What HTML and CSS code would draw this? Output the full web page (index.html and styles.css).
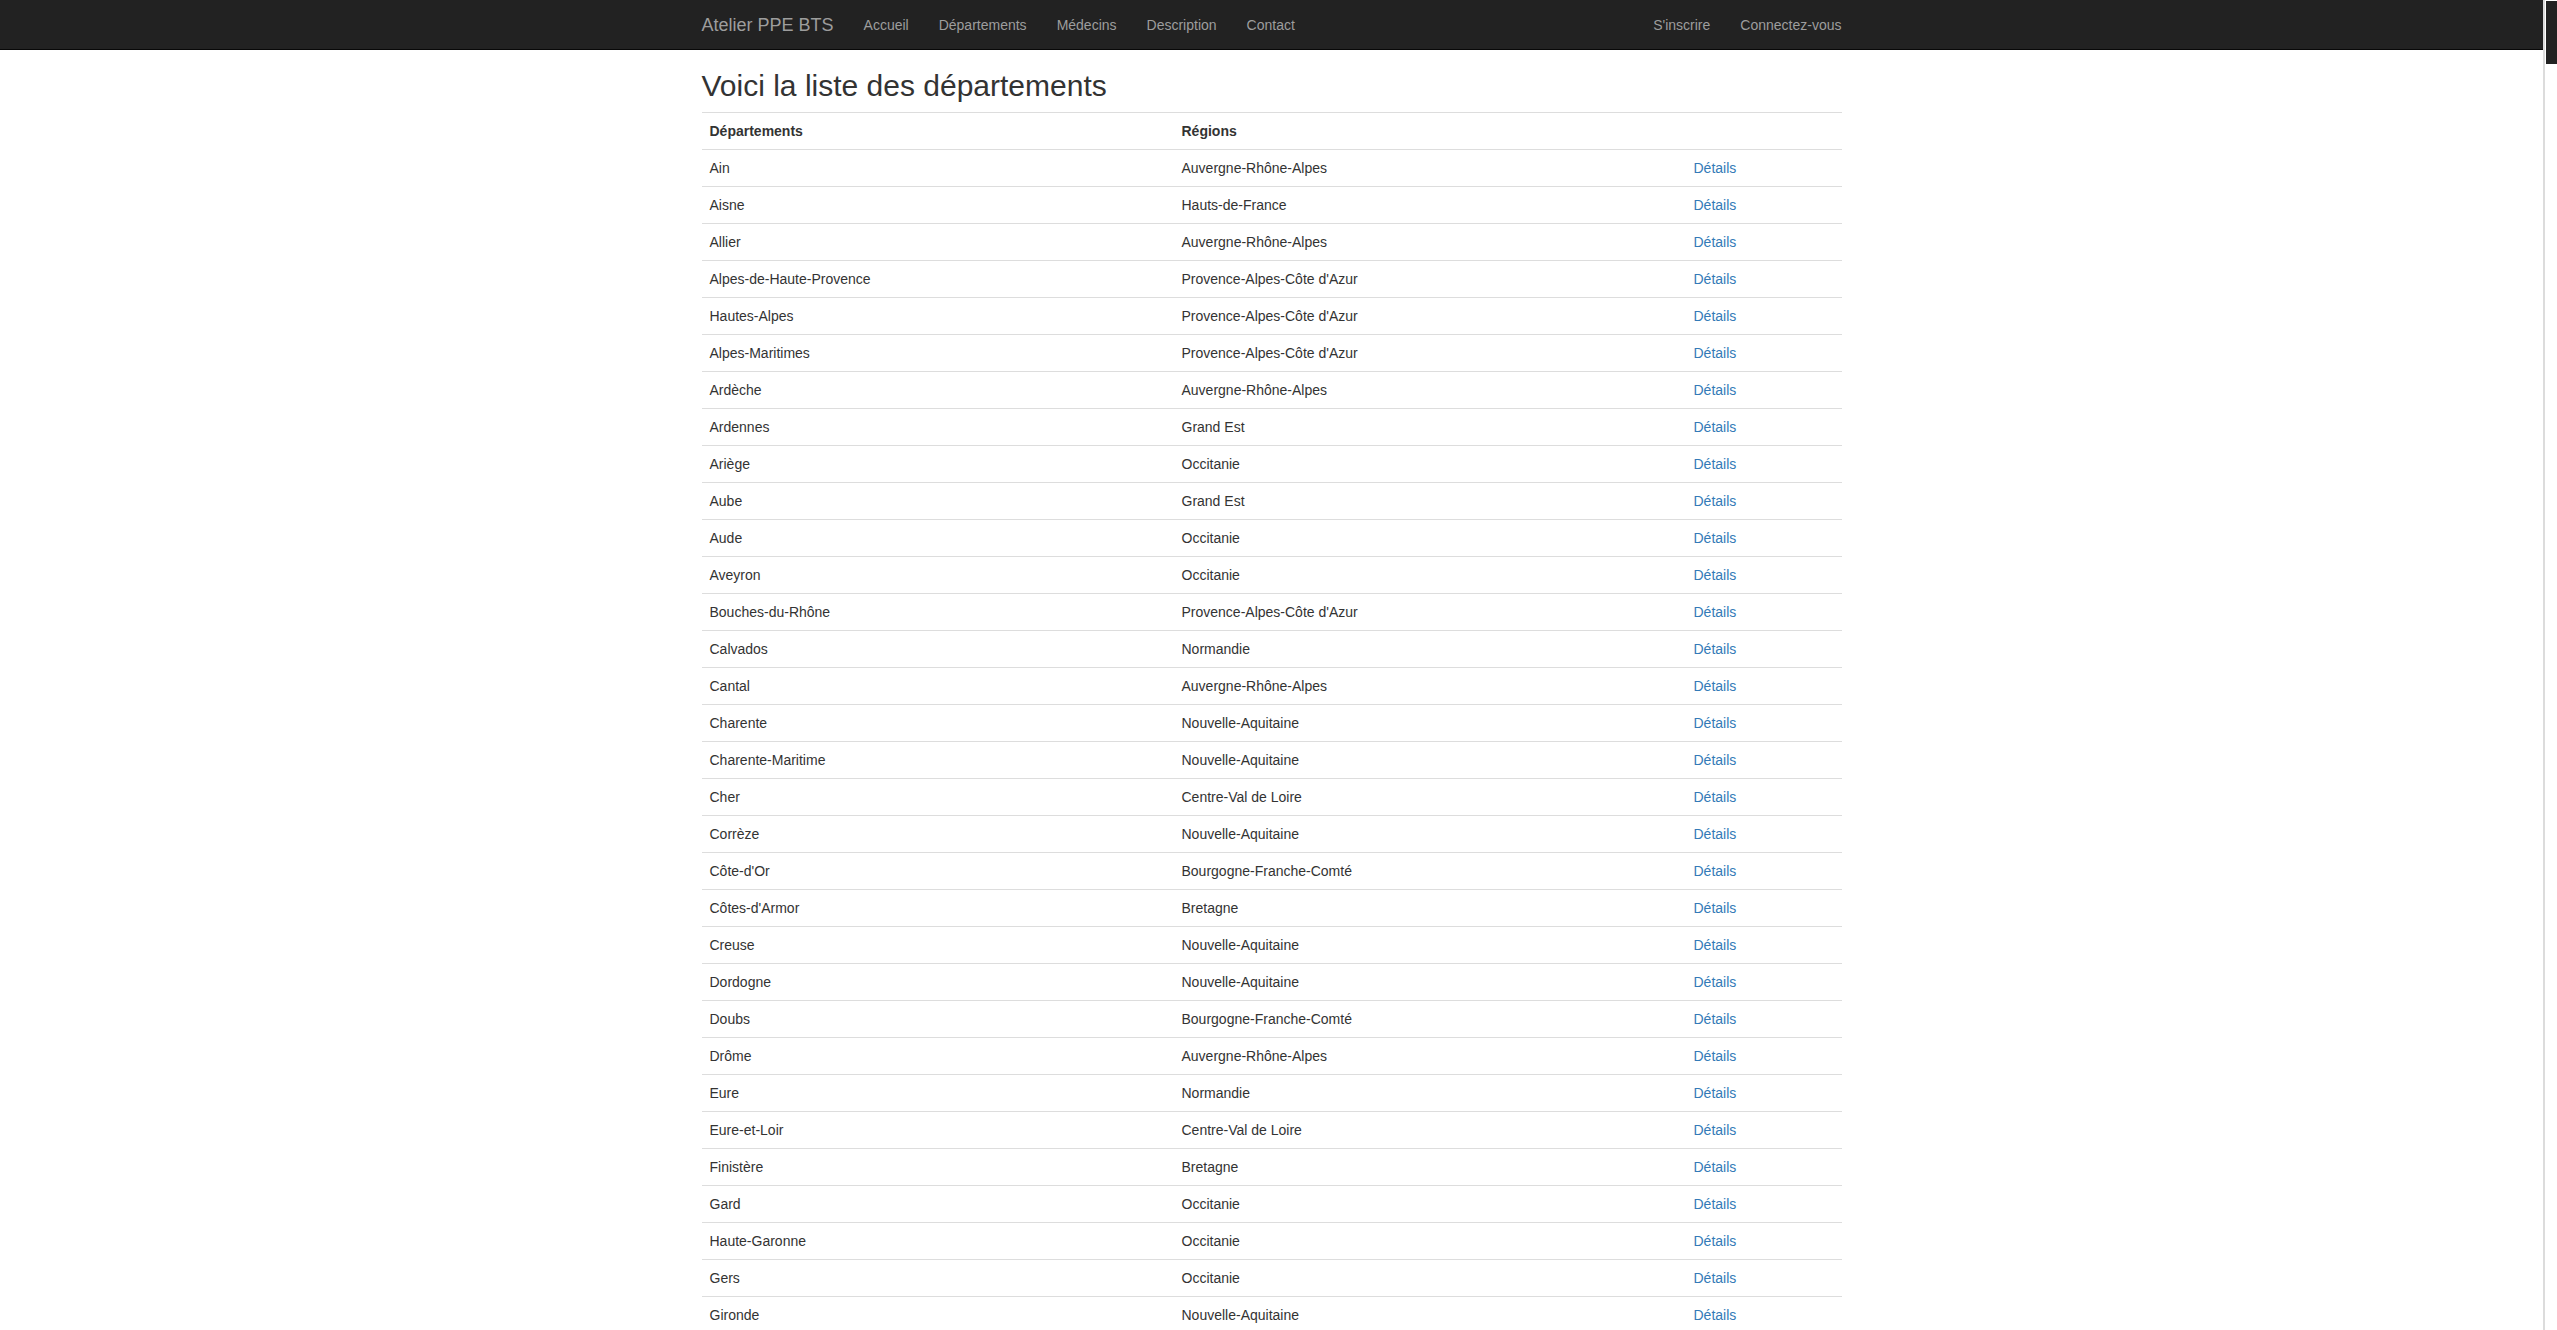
FILE: index.html
```html
<!DOCTYPE html>
<html lang="fr">
<head>
<meta charset="utf-8">
<title>Atelier PPE BTS</title>
<link rel="stylesheet" href="styles.css">
</head>
<body>
<nav class="navbar">
  <div class="container nav-inner">
    <a class="brand" href="#">Atelier PPE BTS</a>
    <ul class="nav">
      <li><a href="#">Accueil</a></li>
      <li><a href="#">Départements</a></li>
      <li><a href="#">Médecins</a></li>
      <li><a href="#">Description</a></li>
      <li><a href="#">Contact</a></li>
    </ul>
    <ul class="nav nav-right">
      <li><a href="#">S'inscrire</a></li>
      <li><a href="#">Connectez-vous</a></li>
    </ul>
  </div>
</nav>
<main class="container">
  <h2 class="title">Voici la liste des départements</h2>
  <table class="table">
    <colgroup><col class="c1"><col class="c2"><col class="c3"></colgroup>
    <tbody>
      <tr><th>Départements</th><th>Régions</th><th></th></tr>
      <tr><td>Ain</td><td>Auvergne-Rhône-Alpes</td><td><a href="#">Détails</a></td></tr>
      <tr><td>Aisne</td><td>Hauts-de-France</td><td><a href="#">Détails</a></td></tr>
      <tr><td>Allier</td><td>Auvergne-Rhône-Alpes</td><td><a href="#">Détails</a></td></tr>
      <tr><td>Alpes-de-Haute-Provence</td><td>Provence-Alpes-Côte d'Azur</td><td><a href="#">Détails</a></td></tr>
      <tr><td>Hautes-Alpes</td><td>Provence-Alpes-Côte d'Azur</td><td><a href="#">Détails</a></td></tr>
      <tr><td>Alpes-Maritimes</td><td>Provence-Alpes-Côte d'Azur</td><td><a href="#">Détails</a></td></tr>
      <tr><td>Ardèche</td><td>Auvergne-Rhône-Alpes</td><td><a href="#">Détails</a></td></tr>
      <tr><td>Ardennes</td><td>Grand Est</td><td><a href="#">Détails</a></td></tr>
      <tr><td>Ariège</td><td>Occitanie</td><td><a href="#">Détails</a></td></tr>
      <tr><td>Aube</td><td>Grand Est</td><td><a href="#">Détails</a></td></tr>
      <tr><td>Aude</td><td>Occitanie</td><td><a href="#">Détails</a></td></tr>
      <tr><td>Aveyron</td><td>Occitanie</td><td><a href="#">Détails</a></td></tr>
      <tr><td>Bouches-du-Rhône</td><td>Provence-Alpes-Côte d'Azur</td><td><a href="#">Détails</a></td></tr>
      <tr><td>Calvados</td><td>Normandie</td><td><a href="#">Détails</a></td></tr>
      <tr><td>Cantal</td><td>Auvergne-Rhône-Alpes</td><td><a href="#">Détails</a></td></tr>
      <tr><td>Charente</td><td>Nouvelle-Aquitaine</td><td><a href="#">Détails</a></td></tr>
      <tr><td>Charente-Maritime</td><td>Nouvelle-Aquitaine</td><td><a href="#">Détails</a></td></tr>
      <tr><td>Cher</td><td>Centre-Val de Loire</td><td><a href="#">Détails</a></td></tr>
      <tr><td>Corrèze</td><td>Nouvelle-Aquitaine</td><td><a href="#">Détails</a></td></tr>
      <tr><td>Côte-d'Or</td><td>Bourgogne-Franche-Comté</td><td><a href="#">Détails</a></td></tr>
      <tr><td>Côtes-d'Armor</td><td>Bretagne</td><td><a href="#">Détails</a></td></tr>
      <tr><td>Creuse</td><td>Nouvelle-Aquitaine</td><td><a href="#">Détails</a></td></tr>
      <tr><td>Dordogne</td><td>Nouvelle-Aquitaine</td><td><a href="#">Détails</a></td></tr>
      <tr><td>Doubs</td><td>Bourgogne-Franche-Comté</td><td><a href="#">Détails</a></td></tr>
      <tr><td>Drôme</td><td>Auvergne-Rhône-Alpes</td><td><a href="#">Détails</a></td></tr>
      <tr><td>Eure</td><td>Normandie</td><td><a href="#">Détails</a></td></tr>
      <tr><td>Eure-et-Loir</td><td>Centre-Val de Loire</td><td><a href="#">Détails</a></td></tr>
      <tr><td>Finistère</td><td>Bretagne</td><td><a href="#">Détails</a></td></tr>
      <tr><td>Gard</td><td>Occitanie</td><td><a href="#">Détails</a></td></tr>
      <tr><td>Haute-Garonne</td><td>Occitanie</td><td><a href="#">Détails</a></td></tr>
      <tr><td>Gers</td><td>Occitanie</td><td><a href="#">Détails</a></td></tr>
      <tr><td>Gironde</td><td>Nouvelle-Aquitaine</td><td><a href="#">Détails</a></td></tr>
      <tr><td>Hérault</td><td>Occitanie</td><td><a href="#">Détails</a></td></tr>
      <tr><td>Ille-et-Vilaine</td><td>Bretagne</td><td><a href="#">Détails</a></td></tr>
      <tr><td>Indre</td><td>Centre-Val de Loire</td><td><a href="#">Détails</a></td></tr>
      <tr><td>Indre-et-Loire</td><td>Centre-Val de Loire</td><td><a href="#">Détails</a></td></tr>
      <tr><td>Isère</td><td>Auvergne-Rhône-Alpes</td><td><a href="#">Détails</a></td></tr>
      <tr><td>Jura</td><td>Bourgogne-Franche-Comté</td><td><a href="#">Détails</a></td></tr>
      <tr><td>Landes</td><td>Nouvelle-Aquitaine</td><td><a href="#">Détails</a></td></tr>
      <tr><td>Loir-et-Cher</td><td>Centre-Val de Loire</td><td><a href="#">Détails</a></td></tr>
    </tbody>
  </table>
</main>
<div class="scrollbar" aria-hidden="true"><div class="scrollbar-thumb"></div></div>
</body>
</html>
```
FILE: styles.css
```css
html {
  background: #fff;
  scrollbar-width: none;
}
html::-webkit-scrollbar { display: none; }
body {
  margin: 0 14px 0 0;
  font-family: "Liberation Sans", Arial, Helvetica, sans-serif;
  font-size: 14px;
  line-height: 20px;
  color: #333;
  background: #fff;
}
a { text-decoration: none; }
.container {
  width: 1140px;
  padding: 0 15px;
  margin: 0 auto;
}
.navbar {
  background: #222;
  border-bottom: 1px solid #080808;
  height: 49px;
}
.nav-inner {
  display: flex;
  align-items: stretch;
  height: 49px;
}
.brand {
  font-size: 18px;
  line-height: 20px;
  padding: 15px 15px 14px 0;
  color: #9d9d9d;
}
.nav {
  list-style: none;
  margin: 0;
  padding: 0;
  display: flex;
}
.nav a {
  display: block;
  padding: 15px 15px 14px;
  line-height: 20px;
  color: #9d9d9d;
}
.nav-right {
  margin-left: auto;
}
.nav-right li:last-child a { padding-right: 0; }
.title {
  font-size: 30px;
  font-weight: 500;
  line-height: 33px;
  margin: 19px 0 10px;
  color: #333;
}
.table {
  width: 100%;
  border-collapse: collapse;
  border-spacing: 0;
  table-layout: fixed;
}
.c1 { width: 472px; }
.c2 { width: 512px; }
.table th, .table td {
  padding: 8px;
  line-height: 20px;
  text-align: left;
  vertical-align: top;
  border-top: 1px solid #ddd;
  font-size: 14px;
}
.table th { font-weight: bold; }
.table a { color: #337ab7; }

.scrollbar {
  position: fixed;
  top: 0;
  right: 0;
  bottom: 0;
  width: 12px;
  background: #fff;
  border-left: 2px solid #dcdcdc;
}
.scrollbar-thumb {
  margin: 1px 0 0 1px;
  height: 63px;
  background: #222;
}
```
